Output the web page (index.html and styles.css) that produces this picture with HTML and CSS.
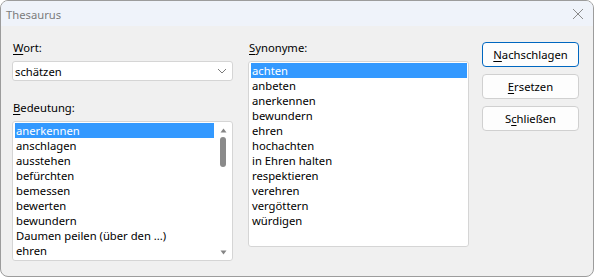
FILE: index.html
```html
<!DOCTYPE html>
<html lang="de">
<head>
<meta charset="utf-8">
<title>Thesaurus</title>
<link rel="stylesheet" href="styles.css">
</head>
<body>
<div class="window">
  <div class="titlebar">
    <span class="title">Thesaurus</span>
    <span class="close">
      <svg width="12" height="12" viewBox="0 0 12 12"><path d="M1 1 L11 11 M11 1 L1 11" stroke="#8a8a8a" stroke-width="1" fill="none"/></svg>
    </span>
  </div>
  <div class="content">
    <div class="col">
      <div class="label"><u>W</u>ort:</div>
      <div class="combo">
        <span>schätzen</span>
        <svg class="chev" width="10" height="6" viewBox="0 0 10 6"><path d="M1 1 L5 5 L9 1" stroke="#7a7a7a" stroke-width="1" fill="none"/></svg>
      </div>
      <div class="label label-gap"><u>B</u>edeutung:</div>
      <div class="listbox list-bed">
        <div class="items">
          <div class="item sel">anerkennen</div>
          <div class="item">anschlagen</div>
          <div class="item">ausstehen</div>
          <div class="item">befürchten</div>
          <div class="item">bemessen</div>
          <div class="item">bewerten</div>
          <div class="item">bewundern</div>
          <div class="item">Daumen peilen (über den ...)</div>
          <div class="item">ehren</div>
        </div>
        <div class="scrollbar">
          <svg width="7" height="5" viewBox="0 0 7 5"><path d="M0.5 4.5 L3.5 0.5 L6.5 4.5 Z" fill="#858585"/></svg>
          <div class="thumb"></div>
          <div class="track"></div>
          <svg width="7" height="5" viewBox="0 0 7 5"><path d="M0.5 0.5 L3.5 4.5 L6.5 0.5 Z" fill="#858585"/></svg>
        </div>
      </div>
    </div>
    <div class="col col-mid">
      <div class="label"><u>S</u>ynonyme:</div>
      <div class="listbox list-syn">
        <div class="items">
          <div class="item sel">achten</div>
          <div class="item">anbeten</div>
          <div class="item">anerkennen</div>
          <div class="item">bewundern</div>
          <div class="item">ehren</div>
          <div class="item">hochachten</div>
          <div class="item">in Ehren halten</div>
          <div class="item">respektieren</div>
          <div class="item">verehren</div>
          <div class="item">vergöttern</div>
          <div class="item">würdigen</div>
        </div>
      </div>
    </div>
    <div class="buttons">
      <div class="btn default"><u>N</u>achschlagen</div>
      <div class="btn"><u>E</u>rsetzen</div>
      <div class="btn">S<u>c</u>hließen</div>
    </div>
  </div>
</div>
</body>
</html>
```
FILE: styles.css
```css
html, body {
  margin: 0;
  padding: 0;
  background: #ffffff;
}
body {
  font-family: "Noto Sans", "Open Sans", sans-serif;
  font-size: 11.25px;
  color: #000;
}
u {
  text-decoration: underline;
  text-underline-offset: 1.5px;
}
.window {
  box-sizing: border-box;
  width: 594px;
  height: 277px;
  border: 1px solid #9c9c9c;
  border-radius: 8px;
  overflow: hidden;
  background: #f0f0f0;
  display: flex;
  flex-direction: column;
}
.titlebar {
  height: 25px;
  flex: none;
  background: #eff3fa;
  display: flex;
  align-items: center;
  justify-content: space-between;
  padding: 0 9px 0 5px;
}
.title {
  color: #7c7c7c;
  line-height: 15px;
  margin-top: 1px;
}
.close {
  display: flex;
  width: 12px;
  height: 12px;
}
.content {
  display: flex;
  padding: 14px 0 0 11px;
}
.col {
  width: 221px;
  display: flex;
  flex-direction: column;
}
.col-mid {
  margin-left: 15px;
}
.label {
  line-height: 15px;
  height: 15px;
  margin-bottom: 6px;
  padding-left: 1px;
}
.label-gap {
  margin-top: 19px;
}
.combo {
  box-sizing: border-box;
  height: 20px;
  background: #fff;
  border: 1px solid #d5d5d5;
  border-radius: 3px;
  display: flex;
  align-items: center;
  justify-content: space-between;
  padding: 0 5px 0 2px;
  line-height: 15px;
}
.listbox {
  box-sizing: border-box;
  background: #fff;
  border: 1px solid #d5d5d5;
  border-radius: 3px;
  display: flex;
  padding: 1px 1px 1px 2px;
}
.list-bed {
  height: 140px;
}
.list-syn {
  height: 186px;
}
.items {
  flex: 1;
  display: flex;
  flex-direction: column;
}
.item {
  height: 15px;
  line-height: 15px;
  padding-left: 1px;
  white-space: nowrap;
}
.item.sel {
  background: #3399ff;
  color: #fff;
}
.scrollbar {
  width: 14px;
  flex: none;
  display: flex;
  flex-direction: column;
  align-items: center;
  padding: 5px 1px 4px 2px;
}
.thumb {
  width: 6px;
  height: 30px;
  border-radius: 3px;
  background: #8a8a8a;
  margin-top: 4px;
}
.track {
  flex: 1;
}
.buttons {
  display: flex;
  flex-direction: column;
  gap: 7px;
  margin-left: 13px;
  margin-top: 2px;
}
.btn {
  box-sizing: border-box;
  width: 97px;
  height: 25px;
  background: #fdfdfd;
  border: 1px solid #d0d0d0;
  border-radius: 4px;
  display: flex;
  align-items: center;
  justify-content: center;
  line-height: 15px;
}
.btn.default {
  border-color: #0067c0;
}
```
